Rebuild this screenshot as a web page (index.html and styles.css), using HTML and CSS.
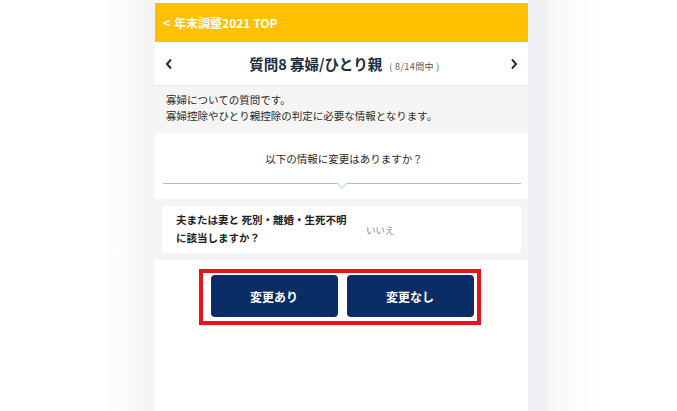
FILE: index.html
```html
<!DOCTYPE html>
<html lang="ja">
<head>
<meta charset="utf-8">
<title>質問8 寡婦/ひとり親</title>
<link rel="stylesheet" href="styles.css">
</head>
<body>
<div class="page">
  <main class="card">
    <header class="topbar"><a class="back" href="#"><span class="lt">&lt;</span>年末調整2021 TOP</a></header>
    <nav class="nav">
      <a class="arrow" href="#" aria-label="前へ"><svg width="8" height="12" viewBox="0 0 8 12"><path d="M6 1.5 L2 6 L6 10.5" fill="none" stroke="#1b2d44" stroke-width="2"/></svg></a>
      <h1 class="title">質問8 寡婦/ひとり親<span class="count">( 8/14問中 )</span></h1>
      <a class="arrow" href="#" aria-label="次へ"><svg width="8" height="12" viewBox="0 0 8 12"><path d="M2 1.5 L6 6 L2 10.5" fill="none" stroke="#1b2d44" stroke-width="2"/></svg></a>
    </nav>
    <div class="desc">
      <p>寡婦についての質問です。</p>
      <p>寡婦控除やひとり親控除の判定に必要な情報となります。</p>
    </div>
    <section class="prompt">
      <p class="ask">以下の情報に変更はありますか？</p>
      <div class="divider"></div>
    </section>
    <section class="answers">
      <div class="qa">
        <div class="q">夫または妻と 死別・離婚・生死不明<br>に該当しますか？</div>
        <div class="a">いいえ</div>
      </div>
    </section>
    <div class="actions">
      <div class="highlight">
        <button class="btn">変更あり</button>
        <button class="btn">変更なし</button>
      </div>
    </div>
  </main>
  <div class="rail"></div>
</div>
</body>
</html>
```
FILE: styles.css
```css
* { box-sizing: border-box; }
html, body { margin: 0; padding: 0; }
body {
  background: #ffffff;
  font-family: "Noto Sans CJK JP", "Noto Sans", sans-serif;
  color: #2a2a2a;
  height: 411px;
  overflow: hidden;
}
.page {
  display: flex;
  padding-left: 155px;
  padding-top: 3px;
  height: 411px;
  background: linear-gradient(to right, #ffffff 0, #ffffff 100px, #f4f4f4 155px, #ffffff 155px, #ffffff 548px, #f7f7f7 548px, #ffffff 600px);
}
.card {
  width: 373px;
  background: #ffffff;
  display: flex;
  flex-direction: column;
  height: 408px;
}
.rail {
  width: 20px;
  background: #eef0f3;
  margin-top: -3px;
}
.topbar {
  background: #ffc000;
  height: 39px;
  display: flex;
  align-items: center;
  padding-left: 8px;
}
.back {
  color: #ffffff;
  text-decoration: none;
  font-weight: bold;
  font-size: 12px;
}
.lt { margin-right: 4px; }
.nav {
  height: 44px;
  display: flex;
  align-items: center;
  justify-content: space-between;
  padding: 0 10px 0 10px;
  border-bottom: 1px solid #e8e8e8;
}
.arrow { display: flex; align-items: center; width: 8px; }
.title {
  margin: 0;
  font-size: 14.5px;
  font-weight: bold;
  color: #1b2d44;
  display: flex;
  align-items: baseline;
  padding-left: 6px;
}
.count {
  font-size: 9px;
  font-weight: normal;
  color: #555555;
  margin-left: 7px;
  letter-spacing: 0.4px;
  white-space: pre;
}
.desc {
  background: #f5f5f5;
  padding: 6px 11px 8px;
  height: 47px;
  font-size: 10.5px;
  line-height: 16px;
}
.desc p { margin: 0; }
.prompt {
  padding: 18px 7px 0 8px;
  height: 66px;
}
.ask {
  margin: 0;
  text-align: center;
  font-size: 10.5px;
  line-height: 16px;
  padding-left: 4px;
}
.divider {
  margin-top: 16px;
  height: 1px;
  background: #9dc1df;
  position: relative;
}
.divider::after {
  content: "";
  position: absolute;
  left: 175px;
  top: -4px;
  width: 7px;
  height: 7px;
  background: #ffffff;
  border-right: 1px solid #b9d3e9;
  border-bottom: 1px solid #b9d3e9;
  transform: rotate(45deg);
}
.answers {
  background: #f4f4f4;
  padding: 7px;
}
.qa {
  background: #ffffff;
  border-radius: 3px;
  display: flex;
  align-items: center;
  padding: 5px 14px 6px;
  height: 47px;
}
.q {
  font-size: 10.5px;
  font-weight: bold;
  line-height: 18px;
  color: #222222;
  width: 190px;
}
.a {
  font-size: 9.5px;
  color: #888888;
  margin-top: 2px;
}
.actions {
  display: flex;
  justify-content: center;
  padding-top: 9px;
  padding-right: 4px;
}
.highlight {
  border: 4px solid #e8141b;
  display: flex;
  gap: 9px;
  padding: 2px 3px 4px 8px;
}
.btn {
  width: 127px;
  height: 42px;
  border: none;
  border-radius: 4px;
  background: #0b2d66;
  color: #ffffff;
  font-family: "Noto Sans CJK JP", "Noto Sans", sans-serif;
  font-weight: bold;
  font-size: 12px;
  padding: 0;
}
```
